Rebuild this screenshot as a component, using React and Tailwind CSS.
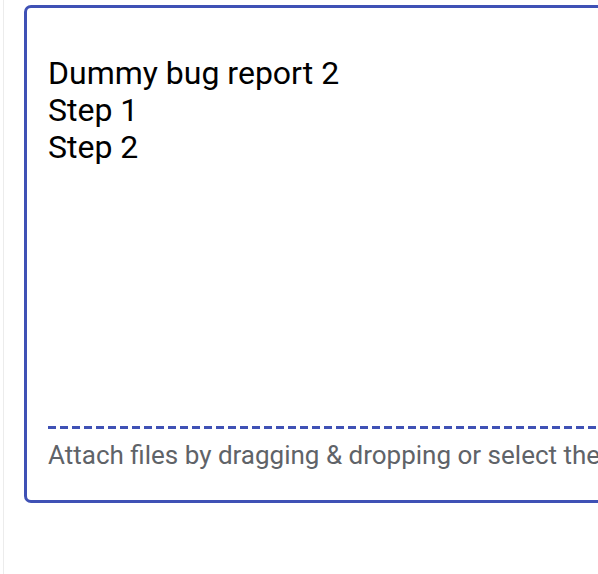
export default function App() {
  return (
    <div className="h-[574px] w-[598px] overflow-hidden bg-white font-['Roboto',_'Liberation_Sans',_sans-serif]">
      <div className="ml-[3px] h-full border-l border-[#ececec] pl-5 pt-[5px]">
        {/* editor box */}
        <div className="flex h-[498px] w-[720px] flex-col rounded-[7px] border-[3px] border-[#3f51b5]">
          <div className="flex-1 pl-[21px] pt-[47px] text-[32px] leading-[37px] text-black">
            <div>Dummy bug report 2</div>
            <div>Step 1</div>
            <div>Step 2</div>
          </div>
          <div className="ml-[21px] h-[3px] bg-[repeating-linear-gradient(to_right,#3f51b5_0_8px,transparent_8px_12px)]" />
          <div className="whitespace-nowrap pl-[21px] pt-[8px] pb-[27px] text-[26px] leading-[36px] text-[#5f6368]">
            Attach files by dragging &amp; dropping or select them.
          </div>
        </div>
      </div>
    </div>
  );
}
